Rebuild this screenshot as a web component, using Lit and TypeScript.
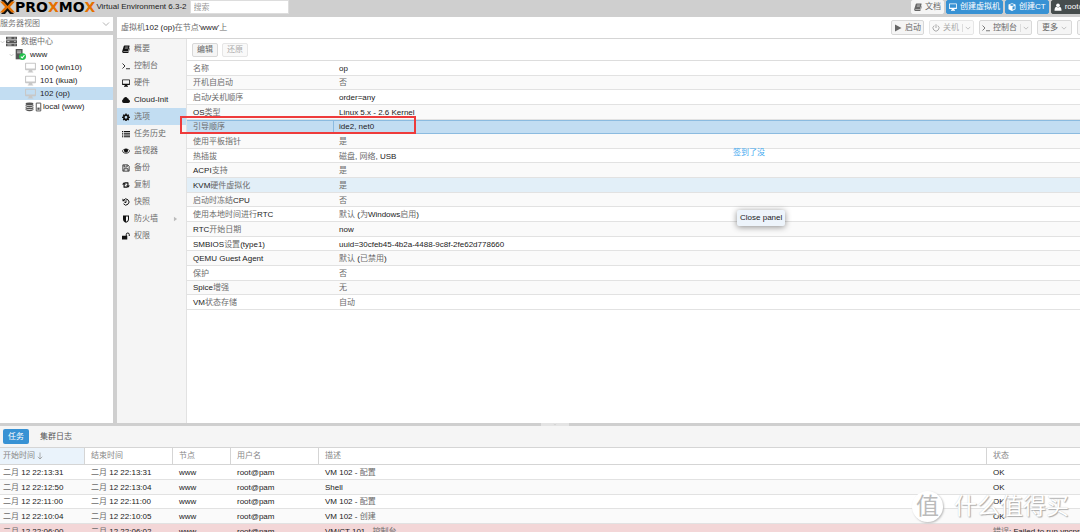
import { LitElement, html, css, svg, nothing } from "lit";
import { customElement, state } from "lit/decorators.js";
import { classMap } from "lit/directives/class-map.js";

const shapes: Record<string, unknown> = {
  book: svg`<path d="M5 1h9.5q1 0 .7 1L12.4 12q-.4 1-1.4 1H3.2q-.8 0-.8.6t.8.6H12q.6 0 .8-.6l2.5-8 .6.8-2.6 8.2q-.4 1.4-1.6 1.4H2.6Q.2 15.500.3 13q0-.8.4-1.600L3.600 2Q4 1 5 1z"/><path d="M6.300 4h6M5.600 6.500h6" stroke="#f4f4f4" stroke-width="1"/>`,
  terminal: svg`<path d="M1 3l5 5-5 5M8 13.500h8" fill="none" stroke="currentColor" stroke-width="1.700"/>`,
  desktop: svg`<path fill-rule="evenodd" d="M1.300 1h13.400Q16 1 16 2.300v8.400q0 1.300-1.300 1.300H10.500l.5 2h1v1.300H4V14h1l.5-2H1.300Q0 12 0 10.700V2.300Q0 1 1.300 1zm.3 1.500v6.800h12.800V2.500z"/>`,
  cloud: svg`<path d="M4 14a4 4 0 0 1-1.600-7.600A4.600 4.600 0 0 1 11 4.500a3 3 0 0 1 2.500 3A3.300 3.300 0 0 1 12.700 14z"/>`,
  gear: svg`<path fill-rule="evenodd" d="M6.700 1h2.600l.4 2 1.300.6L12.800 2.500l1.700 1.800L13.400 6l.5 1.200 2 .4v2.200l-2 .4-.5 1.300 1.100 1.700-1.700 1.800-1.800-1.100-1.300.5-.4 2H6.700l-.4-2L5 13.900 3.200 15 1.500 13.200l1.100-1.700L2.100 10.200l-2-.4V7.600l2-.4L2.600 6 1.500 4.300 3.200 2.500 5 3.600 6.300 3zM8 6a2.700 2.700 0 1 0 0 5.400A2.700 2.700 0 0 0 8 6z"/>`,
  list: svg`<path d="M0 2h2.500v2H0zM4 2h12v2H4zM0 5.500h2.500v2H0zM4 5.500h12v2H4zM0 9h2.500v2H0zM4 9h12v2H4zM0 12.500h2.500v2H0zM4 12.500h12v2H4z"/>`,
  eye: svg`<path fill-rule="evenodd" d="M8 2.800c3.500 0 6.300 2 8 5.200-1.700 3.200-4.500 5.200-8 5.200S1.700 11.200 0 8c1.700-3.200 4.500-5.200 8-5.200zm-3.300 1.900Q2.500 5.800 1.300 8q2.400 4 6.700 4t6.700-4q-1.200-2.200-3.400-3.300a4 4 0 1 1-6.600 0z"/><circle cx="8" cy="6.800" r="3"/>`,
  save: svg`<path fill="none" stroke="currentColor" stroke-width="1.500" d="M1.700 1.700h9.800l2.800 2.800v9.800H1.700zM4.300 2v4h6V2M4 14V9.500h8V14"/>`,
  retweet: svg`<path d="M4 2.500L8 7H5.300v4h4l2 2.500H4.200q-1.200 0-1.200-1.200V7H0zM12 13.500L8 9h2.700V5h-4l-2-2.500h7.100q1.200 0 1.200 1.200V9h3z"/>`,
  history: svg`<path fill="none" stroke="currentColor" stroke-width="2" d="M3 4.500a6 6 0 1 1 0 7M8 4.500V9H5"/><path d="M1 1v5.500h5.500z"/>`,
  shield: svg`<path fill-rule="evenodd" d="M2 1h12v7.500c0 3.500-3 5.700-6 7.200-3-1.500-6-3.700-6-7.200zm6 2v10.500c2.500-1.300 4-2.800 4-5V3z"/>`,
  unlock: svg`<path d="M0 7.500h10.500V15H0z"/><path fill="none" stroke="currentColor" stroke-width="2" d="M8.500 8V5a3 3 0 0 1 6 0v3"/>`,
  play: svg`<path d="M2 1l13 7-13 7z"/>`,
  power: svg`<path fill="none" stroke="currentColor" stroke-width="2" d="M4.500 3.200a6 6 0 1 0 7 0M8 .5V8"/>`,
  cube: svg`<path fill-rule="evenodd" d="M8 .3l7 2.600v9.400l-7 3.500-7-3.500V2.900zM8 2L3 3.900l5 1.900 5-1.900zm1 5.500v6l4.300-2.100V5.900z"/>`,
  user: svg`<circle cx="8" cy="4.500" r="3.700"/><path d="M4.500 7.500Q1 8.500 1 15.500h14q0-7-3.500-8-3 3-7 0z"/>`,
  server: svg`<path d="M0 1h16v4H0zM0 6h16v4H0zM0 11h16v4H0z"/><path d="M2 3h6M2 8h3M2 13h6M12 3h2M12 8h2M12 13h2" stroke="#fff" stroke-width="1"/>`,
  node: svg`<path d="M1 0h10v15H1z"/><path d="M3 3h6M3 5.500h6" stroke="#fff" stroke-width="1"/><circle cx="11" cy="11" r="5" fill="#21bf4b"/><path d="M8.500 11l2 2 3.300-4" fill="none" stroke="#fff" stroke-width="1.500"/>`,
  storage: svg`<ellipse cx="8" cy="2.500" rx="7" ry="2.500"/><path d="M1 4.300q7 3 14 0v2.500q-7 3-14 0zM1 8q7 3 14 0v2.500q-7 3-14 0zM1 11.700q7 3 14 0v1.800q-7 4.500-14 0z"/>`,
  gauge: svg`<path d="M4 1h8v14H4z" fill="#fff" stroke="currentColor" stroke-width="1.700"/><path d="M6 9h4v4H6z"/>`,
  down: svg`<path d="M2 5l6 6 6-6" fill="none" stroke="currentColor" stroke-width="1.500"/>`,
  right: svg`<path d="M3 1l10 7-10 7z"/>`,
  sort: svg`<path d="M8 1v13M3.500 9.500L8 14l4.500-4.500" fill="none" stroke="currentColor" stroke-width="1.300"/>`,
  help: svg`<circle cx="8" cy="8" r="7.500"/>`,
};

const icon = (name: string, cls = "") =>
  html`<svg class="icon ${cls}" viewBox="0 0 16 16" aria-hidden="true">${shapes[name]}</svg>`;

// Han runs are set in a lighter grey than the Latin text around them.
const mixed = (text: string) =>
  html`<span>${text.split(/([\u4e00-\u9fff]+)/).map((run, i) => (i % 2 ? html`<span class="han">${run}</span>` : run))}</span>`;

const menu = [
  ["book", "概要"], ["terminal", "控制台"], ["desktop", "硬件"], ["cloud", "Cloud-Init"],
  ["gear", "选项"], ["list", "任务历史"], ["eye", "监视器"], ["save", "备份"],
  ["retweet", "复制"], ["history", "快照"], ["shield", "防火墙"], ["unlock", "权限"],
];

const options = [
  ["名称", "op"], ["开机自启动", "否"], ["启动/关机顺序", "order=any"],
  ["OS类型", "Linux 5.x - 2.6 Kernel"], ["引导顺序", "ide2, net0"], ["使用平板指针", "是"],
  ["热插拔", "磁盘, 网络, USB"], ["ACPI支持", "是"], ["KVM硬件虚拟化", "是"],
  ["启动时冻结CPU", "否"], ["使用本地时间进行RTC", "默认 (为Windows启用)"],
  ["RTC开始日期", "now"], ["SMBIOS设置(type1)", "uuid=30cfeb45-4b2a-4488-9c8f-2fe62d778660"],
  ["QEMU Guest Agent", "默认 (已禁用)"], ["保护", "否"], ["Spice增强", "无"], ["VM状态存储", "自动"],
];

const tasks = [
  ["二月 12 22:13:31", "二月 12 22:13:31", "www", "root@pam", "VM 102 - 配置", "OK"],
  ["二月 12 22:12:50", "二月 12 22:13:04", "www", "root@pam", "Shell", "OK"],
  ["二月 12 22:11:00", "二月 12 22:11:00", "www", "root@pam", "VM 102 - 配置", "OK"],
  ["二月 12 22:10:04", "二月 12 22:10:05", "www", "root@pam", "VM 102 - 创建", "OK"],
  ["二月 12 22:06:00", "二月 12 22:06:02", "www", "root@pam", "VM/CT 101 - 控制台", "错误: Failed to run vncproxy."],
];

const base = css`
  :host { font: 8px/12px "Liberation Sans", "Noto Sans CJK SC", sans-serif; color: #222; }
  * { box-sizing: border-box; }
  button, input, select { font: inherit; color: inherit; margin: 0; }
  button { cursor: pointer; white-space: nowrap; }
  ul { list-style: none; margin: 0; padding: 0; }
  a { color: inherit; text-decoration: none; }
  .han { color: #6c6c6c; }
  .icon { width: 8px; height: 8px; flex: none; fill: currentColor; }
  table { border-collapse: separate; border-spacing: 0; table-layout: fixed; width: 100%; }
  th, td { padding: 0 6px; text-align: left; font-weight: 400; white-space: nowrap; overflow: hidden; }
  td { padding-top: 2px; line-height: 10px; }
  .btn {
    display: flex; align-items: center; gap: 3px; flex: none; height: 15px; padding: 0 5px;
    border: 1px solid #d8d8d8; border-radius: 2px; background: #f5f5f5; color: #666;
  }
  .btn:disabled { color: #aaa; border-color: #e6e6e6; background: #f9f9f9; }
`;

@customElement("pve-header")
class PveHeader extends LitElement {
  static styles = [base, css`
    :host { display: flex; align-items: flex-start; height: 17px; background: #cfcfcf; overflow: hidden; }
    .mark { width: 15px; height: 14px; flex: none; }
    .logo { font: bold 14px/14px "DejaVu Sans", sans-serif; color: #000; }
    .logo b { color: #e57000; }
    .version { margin: 0 3px 0 1px; line-height: 14px; white-space: nowrap; }
    .search { width: 99px; height: 14px; border: 1px solid #ddd; padding: 0 3px; background: #fff; }
    .search::placeholder { color: #999; }
    .actions { display: flex; flex: 0 0 169px; gap: 2px; margin-left: auto; overflow: hidden; }
    .btn { height: 14px; padding: 0 2px; border-color: #f5f5f5; }
    .primary { background: #3892d4; border-color: #3892d4; color: #fff; }
    .user { background: #464d4d; border-color: #464d4d; color: #fff; }
  `];
  render() {
    return html`
      <svg class="mark" viewBox="0 0 15 14" aria-hidden="true">
        <path d="M1 0h4l2.500 3L10 0h4L7.500 7zM1 14h4l2.500-3 2.500 3h4L7.500 7z" fill="#111"/>
        <path d="M0 1.500h3.500L7.500 6l4-4.500H15L10 7l5 5.500h-3.500L7.500 8l-4 4.500H0L5 7z" fill="#e57000"/>
      </svg>
      <span class="logo">PRO<b>X</b>MO<b>X</b></span>
      <span class="version">Virtual Environment 6.3-2</span>
      <input class="search" type="search" placeholder="搜索" aria-label="搜索">
      <div class="actions">
        <button class="btn">${icon("book")}文档</button>
        <button class="btn primary">${icon("desktop")}创建虚拟机</button>
        <button class="btn primary">${icon("cube")}创建CT</button>
        <button class="btn user">${icon("user")}root@pam</button>
      </div>`;
  }
}

@customElement("pve-tree")
class PveTree extends LitElement {
  static styles = [base, css`
    :host { display: flex; flex-direction: column; gap: 4px; background: #cfcfcf; }
    .picker { position: relative; }
    .view { display: block; appearance: none; width: 100%; height: 14px; border: 0; padding: 0; background: #fff; color: #777; }
    .caret { position: absolute; right: 3px; top: 3px; color: #999; pointer-events: none; }
    .tree { flex: 1; background: #fff; }
    .row { display: flex; align-items: center; gap: 4px; height: 13px; white-space: nowrap; }
    .d1 { padding-left: 9px; }
    .d2 { padding-left: 25px; }
    .on { background: #c2ddf2; }
    .arrow { width: 5px; color: #999; margin-right: -3px; }
    .big { width: 11px; height: 11px; }
    .off { color: #c8c8c8; }
    .store { gap: 0; }
    .store .icon { width: 9px; height: 10px; }
    .dark { color: #555; }
  `];
  render() {
    return html`
      <div class="picker">
        <select class="view" aria-label="视图"><option>服务器视图</option></select>
        ${icon("down", "caret")}
      </div>
      <ul class="tree" role="tree">
        <li class="row" role="treeitem">${icon("down", "arrow")}${icon("server", "big dark")}${mixed("数据中心")}</li>
        <li class="row d1" role="treeitem">${icon("down", "arrow")}${icon("node", "big dark")}www</li>
        ${["100 (win10)", "101 (ikuai)", "102 (op)"].map((t, i) => html`
          <li class="row d2 ${i === 2 ? "on" : ""}" role="treeitem">${icon("desktop", "big off")}${t}</li>`)}
        <li class="row d2 store" role="treeitem">${icon("storage", "dark")}${icon("gauge", "dark")}local (www)</li>
      </ul>`;
  }
}

@customElement("pve-guest")
class PveGuest extends LitElement {
  @state() private selected = 4;
  static styles = [base, css`
    :host { display: flex; flex-direction: column; background: #fff; min-width: 0; position: relative; overflow: hidden; }
    .title { display: flex; align-items: center; height: 22px; padding-left: 4px; border-bottom: 1px solid #d5d5d5; }
    .heading { margin: 0; font: inherit; white-space: nowrap; }
    .actions { display: flex; flex: 0 0 189px; gap: 5px; margin-left: auto; overflow: hidden; }
    .actions .btn { padding: 0 2px; }
    .actions .text { padding: 0 4px; }
    .small { width: 6px; color: #999; }
    .split { border-left: 1px solid #ddd; padding-left: 2px; display: flex; }
    .body { flex: 1; display: flex; min-height: 0; }
    .menu { flex: 0 0 70px; background: #f5f5f5; border-right: 1px solid #e2e2e2; padding-top: 1px; }
    .item { display: flex; align-items: center; gap: 4px; height: 17px; padding: 0 8px 0 5px; }
    .item .icon { color: #111; }
    .item .more { width: 5px; height: 6px; margin-left: auto; color: #bbb; }
    .current { background: #c2ddf2; }
    .content { flex: 1; min-width: 0; }
    .bar { display: flex; align-items: center; gap: 4px; height: 22px; padding-left: 5px; border-bottom: 1px solid #ddd; }
    .bar .btn { height: 14px; padding: 0 4px; }
    .grid { height: 249px; }
    .grid td { border-bottom: 1px solid #e2e2e2; }
    .grid tr:nth-child(even) td { background: #fafafa; }
    .name { width: 146px; }
    .grid .hover td { background: #e2eff8; }
    .grid .selected td { background: #c2ddf2; border-top: 1px solid #8bbbe0; border-bottom-color: #8bbbe0; padding-top: 1px; }
    .grid .selected td + td { border-left: 1px solid #8bbbe0; padding-left: 5px; }
    .frame { position: absolute; left: 63px; top: 99px; width: 236px; height: 18px; border: 2px solid #ee3b3b; pointer-events: none; }
    .note { position: absolute; left: 616px; top: 130px; color: #45aaf0; white-space: nowrap; }
    .close {
      position: absolute; left: 620px; top: 193px; height: 16px; padding: 0 3px; border: 0; border-radius: 2px;
      background: #edf4fb; box-shadow: 0 1px 6px rgba(0, 0, 0, 0.45);
    }
  `];
  render() {
    return html`
      <div class="title">
        <h1 class="heading">${mixed("虚拟机102 (op)在节点'www'上")}</h1>
        <div class="actions">
          <button class="btn">${icon("play")}启动</button>
          <button class="btn" disabled>${icon("power")}关机<span class="split">${icon("down", "small")}</span></button>
          <button class="btn">${icon("terminal")}控制台<span class="split">${icon("down", "small")}</span></button>
          <button class="btn text">更多${icon("down", "small")}</button>
          <button class="btn">${icon("help")}帮助</button>
        </div>
      </div>
      <div class="body">
        <nav class="menu">
          ${menu.map(([glyph, text]) => html`
            <a href="#" class=${classMap({ item: true, current: glyph === "gear" })}>
              ${icon(glyph)}${mixed(text)}${glyph === "shield" ? icon("right", "more") : nothing}
            </a>`)}
        </nav>
        <div class="content">
          <div class="bar"><button class="btn">编辑</button><button class="btn" disabled>还原</button></div>
          <table class="grid">
            <colgroup><col class="name"><col></colgroup>
            <tbody>
              ${options.map(([name, value], i) => html`
                <tr class=${classMap({ selected: i === this.selected, hover: i === 8 })}
                    @click=${() => (this.selected = i)}><td>${mixed(name)}</td><td>${mixed(value)}</td></tr>`)}
            </tbody>
          </table>
        </div>
      </div>
      <div class="frame"></div>
      <span class="note">签到了没</span>
      <button class="close">Close panel</button>`;
  }
}

@customElement("pve-log")
class PveLog extends LitElement {
  static styles = [base, css`
    :host { display: block; background: #fff; overflow: hidden; }
    .tabs { display: flex; align-items: center; gap: 6px; height: 21px; padding-left: 3px; background: #f5f5f5; }
    .tab { height: 15px; padding: 0 5px; border: 0; border-radius: 2px; background: none; color: #555; }
    .tab.on { background: #3892d4; color: #fff; }
    .log { height: 92px; }
    .log th { height: 18px; color: #888; border: solid #d5d5d5; border-width: 1px 1px 1px 0; }
    .log th:first-child { background: #eaf3fb; }
    .log th:last-child { border-right: 0; }
    .log td { border-bottom: 1px solid #e2e2e2; }
    .log th:first-child, .log td:first-child { padding-left: 3px; }
    .log tbody tr:nth-child(even) { background: #fafafa; }
    .log tbody .error { background: #f3d6d7; }
    .time { width: 85px; }
    .wide { width: 88px; }
    .node { width: 58px; }
    .status { width: 93px; }
    .sort { vertical-align: middle; margin-left: 1px; }
  `];
  render() {
    return html`
      <div class="tabs">
        <button class="tab on">任务</button>
        <button class="tab">集群日志</button>
      </div>
      <table class="log">
        <colgroup><col class="time"><col class="wide"><col class="node"><col class="wide"><col><col class="status"></colgroup>
        <thead><tr><th>开始时间${icon("sort", "sort")}</th><th>结束时间</th><th>节点</th><th>用户名</th><th>描述</th><th>状态</th></tr></thead>
        <tbody>
          ${tasks.map((row) => html`
            <tr class=${row[5] === "OK" ? "" : "error"}>${row.map((cell) => html`<td>${mixed(cell)}</td>`)}</tr>`)}
        </tbody>
      </table>`;
  }
}

@customElement("app-root")
class AppRoot extends LitElement {
  static styles = [base, css`
    :host { display: flex; flex-direction: column; height: 100vh; position: relative; overflow: hidden; background: #cfcfcf; }
    .main { flex: 1; display: flex; gap: 4px; min-height: 0; }
    .side { flex: 0 0 113px; }
    .guest { flex: 1; }
    .splitter { display: flex; justify-content: center; height: 3px; flex: none; padding-left: 30px; }
    .grip { width: 28px; background: #e4e4e4; color: #aaa; display: flex; justify-content: center; }
    .grip .icon { height: 3px; }
    .log { flex: 0 0 106px; }
    .stamp {
      position: absolute; right: 11px; bottom: 9px; display: flex; align-items: center; gap: 11px;
      font-size: 23px; line-height: 34px; color: #fff; pointer-events: none;
      text-shadow: 1px 1px 1px #aaa, 0 0 1px #ccc;
    }
    .disc {
      width: 31px; height: 31px; border-radius: 50%; background: #fff; color: #bbb; text-align: center;
      line-height: 30px; box-shadow: 1px 1px 2px #bbb; text-shadow: none;
    }
  `];
  render() {
    return html`
      <pve-header></pve-header>
      <div class="main">
        <pve-tree class="side"></pve-tree>
        <pve-guest class="guest"></pve-guest>
      </div>
      <div class="splitter"><span class="grip">${icon("down")}</span></div>
      <pve-log class="log"></pve-log>
      <div class="stamp"><span class="disc">值</span><span>什么值得买</span></div>`;
  }
}
